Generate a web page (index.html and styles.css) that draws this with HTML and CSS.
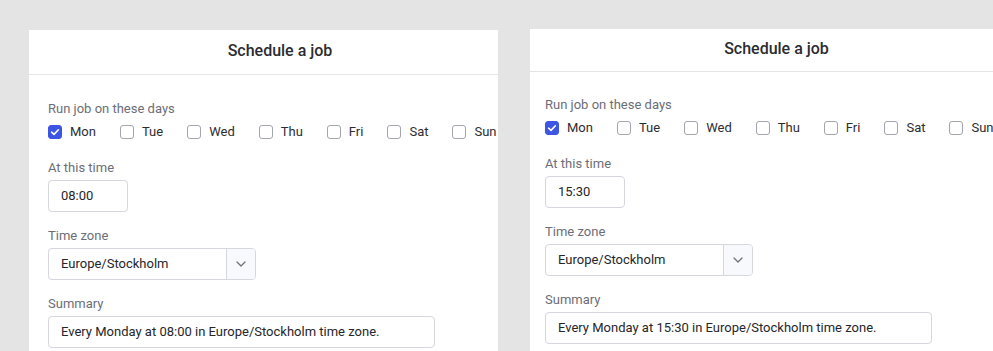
FILE: index.html
```html
<!DOCTYPE html>
<html lang="en">
<head>
<meta charset="utf-8">
<title>Schedule a job</title>
<link rel="stylesheet" href="styles.css">
</head>
<body>
<div class="stage">
  <section class="frame frame-a">
    <div class="inner inner-a">
      <header class="head head-a"><h1 class="title">Schedule a job</h1></header>
      <div class="body body-a">
        <div class="label">Run job on these days</div>
        <div class="days">
          <label class="day"><span class="cb checked"><svg viewBox="0 0 14 14" width="14" height="14"><path d="M3.6 7.2 L6 9.4 L10.4 4.8" fill="none" stroke="#fff" stroke-width="1.6" stroke-linecap="round" stroke-linejoin="round"/></svg></span><span class="dtext">Mon</span></label>
          <label class="day"><span class="cb"></span><span class="dtext">Tue</span></label>
          <label class="day"><span class="cb"></span><span class="dtext">Wed</span></label>
          <label class="day"><span class="cb"></span><span class="dtext">Thu</span></label>
          <label class="day"><span class="cb"></span><span class="dtext">Fri</span></label>
          <label class="day"><span class="cb"></span><span class="dtext">Sat</span></label>
          <label class="day"><span class="cb"></span><span class="dtext">Sun</span></label>
        </div>
        <div class="field first">
          <div class="label">At this time</div>
          <div class="ctrl time">08:00</div>
        </div>
        <div class="field">
          <div class="label">Time zone</div>
          <div class="select">
            <div class="sel-val">Europe/Stockholm</div>
            <div class="sel-btn"><svg viewBox="0 0 10 6" width="10" height="6"><path d="M1 1 L5 5 L9 1" fill="none" stroke="#6f7078" stroke-width="1.3" stroke-linecap="round" stroke-linejoin="round"/></svg></div>
          </div>
        </div>
        <div class="field">
          <div class="label">Summary</div>
          <div class="ctrl summary">Every Monday at 08:00 in Europe/Stockholm time zone.</div>
        </div>
      </div>
    </div>
  </section>
  <section class="frame frame-b">
    <div class="inner inner-b">
      <header class="head head-b"><h1 class="title">Schedule a job</h1></header>
      <div class="body body-b">
        <div class="label">Run job on these days</div>
        <div class="days">
          <label class="day"><span class="cb checked"><svg viewBox="0 0 14 14" width="14" height="14"><path d="M3.6 7.2 L6 9.4 L10.4 4.8" fill="none" stroke="#fff" stroke-width="1.6" stroke-linecap="round" stroke-linejoin="round"/></svg></span><span class="dtext">Mon</span></label>
          <label class="day"><span class="cb"></span><span class="dtext">Tue</span></label>
          <label class="day"><span class="cb"></span><span class="dtext">Wed</span></label>
          <label class="day"><span class="cb"></span><span class="dtext">Thu</span></label>
          <label class="day"><span class="cb"></span><span class="dtext">Fri</span></label>
          <label class="day"><span class="cb"></span><span class="dtext">Sat</span></label>
          <label class="day"><span class="cb"></span><span class="dtext">Sun</span></label>
        </div>
        <div class="field first">
          <div class="label">At this time</div>
          <div class="ctrl time">15:30</div>
        </div>
        <div class="field">
          <div class="label">Time zone</div>
          <div class="select">
            <div class="sel-val">Europe/Stockholm</div>
            <div class="sel-btn"><svg viewBox="0 0 10 6" width="10" height="6"><path d="M1 1 L5 5 L9 1" fill="none" stroke="#6f7078" stroke-width="1.3" stroke-linecap="round" stroke-linejoin="round"/></svg></div>
          </div>
        </div>
        <div class="field">
          <div class="label">Summary</div>
          <div class="ctrl summary">Every Monday at 15:30 in Europe/Stockholm time zone.</div>
        </div>
      </div>
    </div>
  </section>
</div>
</body>
</html>
```

FILE: styles.css
```css
html, body {
  margin: 0;
  padding: 0;
  overflow: hidden;
  background: #e4e4e4;
  font-family: Roboto, "Liberation Sans", Arial, sans-serif;
  color: #2a2b30;
}

.stage {
  display: flex;
  align-items: flex-start;
  gap: 32px;
  padding: 29px 0 0 29px;
  width: 100%;
  height: 351px;
  box-sizing: border-box;
  overflow: hidden;
}

.frame {
  background: #fff;
  overflow: hidden;
  flex: none;
}

.frame-a { width: 469px; height: 321px; margin-top: 1px; }
.frame-b { width: 463px; height: 322px; }

.inner-a { width: 502px; }
.inner-b { width: 493px; }

.head {
  border-bottom: 1px solid #e4e4e7;
  text-align: center;
}
.head-a { padding: 9px 0 11px; }
.head-b { padding: 8px 0 10px; }

.title {
  margin: 0;
  font-size: 16px;
  line-height: 24px;
  font-weight: 500;
  color: #2b2c31;
}

.body-a { padding: 23px 0 0 19px; }
.body-b { padding: 22px 0 0 15px; }

.label {
  font-size: 13px;
  line-height: 20px;
  padding: 1px 0 2px;
  margin: 0;
  color: #6c6e77;
}

.days {
  display: flex;
  gap: 24px;
  height: 22px;
  align-items: center;
  white-space: nowrap;
}

.day {
  display: flex;
  align-items: center;
  gap: 8px;
}

.cb {
  width: 14px;
  height: 14px;
  box-sizing: border-box;
  border: 1px solid #a4a5ad;
  border-radius: 3px;
  background: #fff;
  display: flex;
  align-items: center;
  justify-content: center;
  flex: none;
}

.cb.checked {
  background: #3d55e3;
  border-color: #3d55e3;
}

.cb.checked svg { flex: none; }

.dtext {
  font-size: 13px;
  line-height: 20px;
  color: #2c2d32;
}

.field { margin-top: 13px; }
.field.first { margin-top: 14px; }

.ctrl {
  height: 32px;
  box-sizing: border-box;
  border: 1px solid #d6d6df;
  border-radius: 4px;
  padding: 0 12px;
  font-size: 13px;
  line-height: 30px;
  color: #25262b;
  white-space: nowrap;
}

.time { width: 80px; }
.summary { width: 387px; }

.select {
  display: flex;
  width: 208px;
  height: 32px;
  box-sizing: border-box;
  border: 1px solid #d6d6df;
  border-radius: 4px;
  overflow: hidden;
}

.sel-val {
  flex: 1;
  padding: 0 12px;
  font-size: 13px;
  line-height: 30px;
  color: #25262b;
  white-space: nowrap;
}

.sel-btn {
  width: 28px;
  flex: none;
  border-left: 1px solid #d6d6df;
  background: #f8f9fc;
  display: flex;
  align-items: center;
  justify-content: center;
}
```
